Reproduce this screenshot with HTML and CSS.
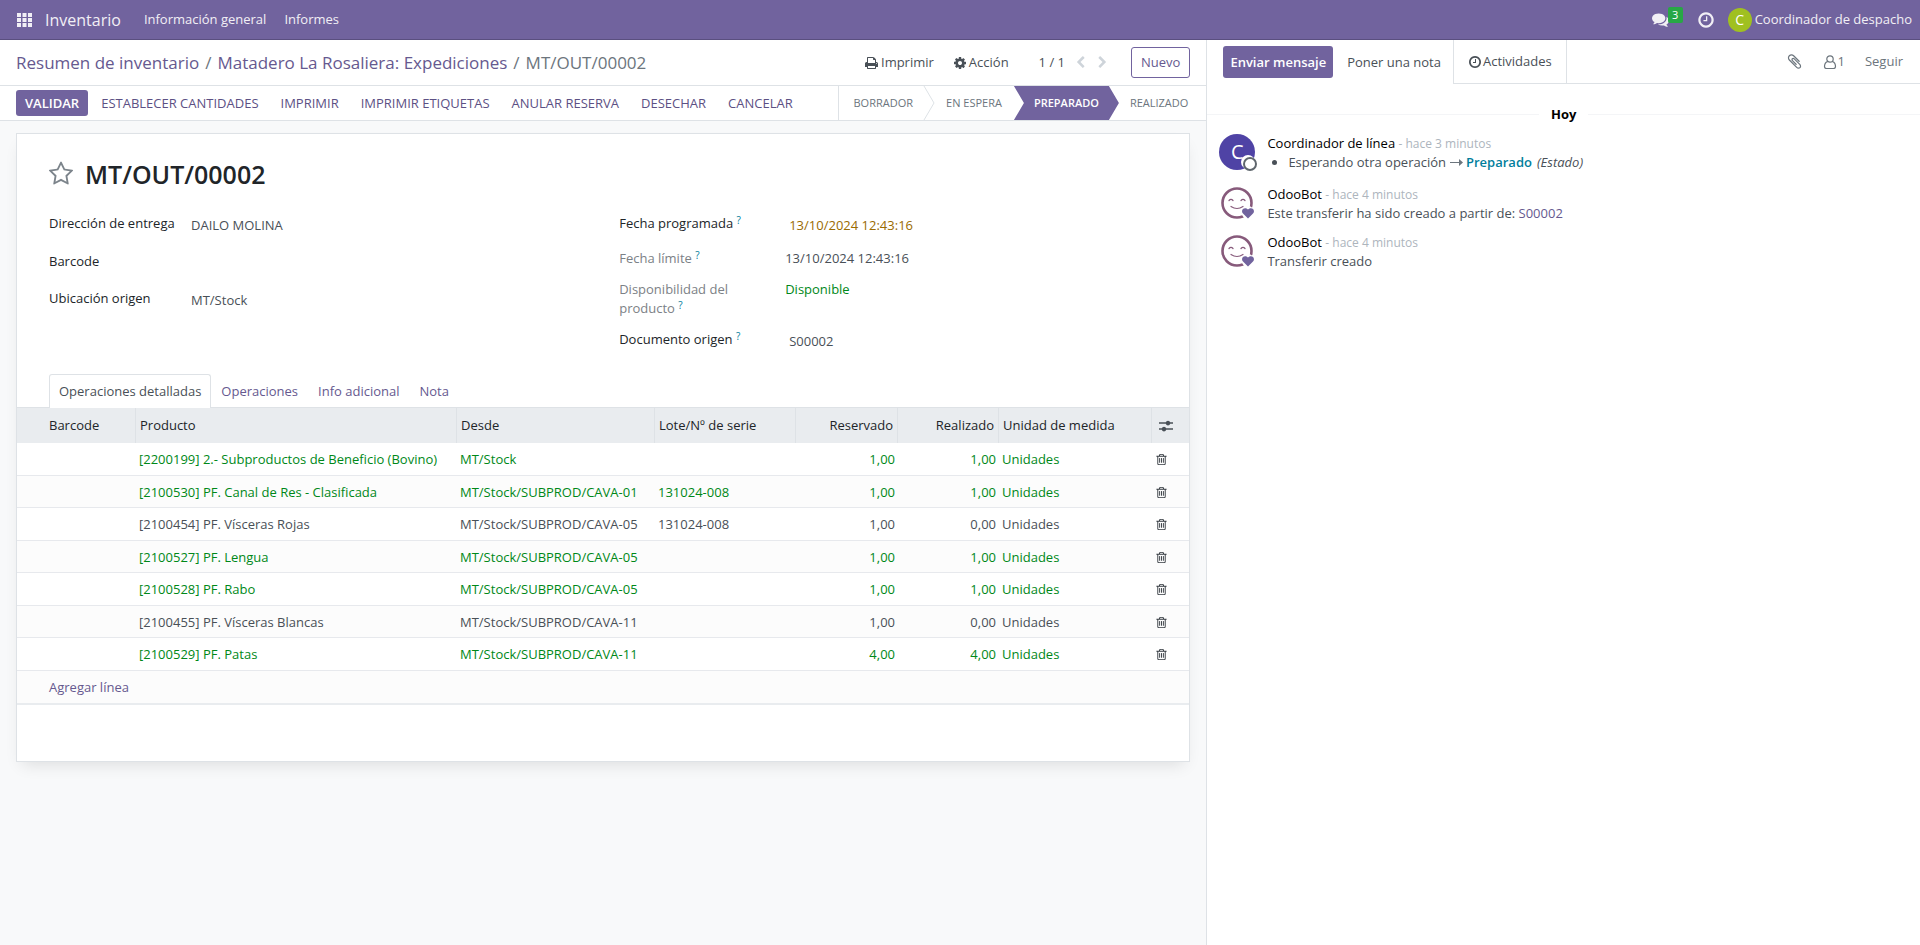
FILE: index.html
```html
<!DOCTYPE html>
<html lang="es">
<head>
<meta charset="utf-8">
<title>MT/OUT/00002 - Inventario</title>
<link rel="stylesheet" href="styles.css">
</head>
<body>
<svg class="defs" aria-hidden="true">
  <symbol id="i-print" viewBox="0 0 1792 1792"><path d="M384 1536h896v-256h-896v256zm0-640h896v-384h-160q-40 0-68-28t-28-68v-160h-640v640zm1152 64q0-26-19-45t-45-19-45 19-19 45 19 45 45 19 45-19 19-45zm128 0v416q0 13-9.5 22.5t-22.5 9.5h-224v160q0 40-28 68t-68 28h-960q-40 0-68-28t-28-68v-160h-224q-13 0-22.5-9.5t-9.5-22.5v-416q0-79 56.5-135.5t135.500-56.500h64v-544q0-40 28-68t68-28h672q40 0 88 20t76 48l152 152q28 28 48 76t20 88v256h64q79 0 135.500 56.500t56.500 135.500z"/></symbol>
  <symbol id="i-cog" viewBox="0 0 1792 1792"><path d="M1152 896q0-106-75-181t-181-75-181 75-75 181 75 181 181 75 181-75 75-181zm512-109v222q0 12-8 23t-20 13l-185 28q-19 54-39 91 35 50 107 138 10 12 10 25t-9 23q-27 37-99 108t-94 71q-12 0-26-9l-138-108q-44 23-91 38-16 136-29 186-7 28-36 28h-222q-14 0-24.500-8.500t-11.500-21.500l-28-184q-49-16-90-37l-141 107q-10 9-25 9-14 0-25-11-126-114-165-168-7-10-7-23 0-12 8-23 15-21 51-66.500t54-70.500q-27-50-41-99l-183-27q-13-2-21-12.500t-8-23.500v-222q0-12 8-23t19-13l186-28q14-46 39-92-40-57-107-138-10-12-10-24 0-10 9-23 26-36 98.500-107.500t94.500-71.500q13 0 26 10l138 107q44-23 91-38 16-136 29-186 7-28 36-28h222q14 0 24.500 8.500t11.500 21.500l28 184q49 16 90 37l142-107q9-9 24-9 13 0 25 10 129 119 165 170 7 8 7 22 0 12-8 23-15 21-51 66.500t-54 70.500q26 50 41 98l183 28q13 2 21 12.500t8 23.500z"/></symbol>
  <symbol id="i-clock" viewBox="0 0 1792 1792"><path d="M1024 544v448q0 14-9 23t-23 9h-320q-14 0-23-9t-9-23v-64q0-14 9-23t23-9h224v-352q0-14 9-23t23-9h64q14 0 23 9t9 23zm416 352q0-148-73-273t-198-198-273-73-273 73-198 198-73 273 73 273 198 198 273 73 273-73 198-198 73-273zm224 0q0 209-103 385.500t-279.500 279.500-385.500 103-385.500-103-279.500-279.500-103-385.500 103-385.500 279.500-279.500 385.500-103 385.500 103 279.500 279.500 103 385.500z"/></symbol>
  <symbol id="i-comments" viewBox="0 0 1792 1792"><path d="M1408 768q0 139-94 257t-256.500 186.500-353.500 68.500q-86 0-176-16-124 88-278 128-36 9-86 16h-3q-11 0-20.500-8t-11.500-21q-1-3-1-6.500t.5-6.500 2-6l2.500-5 3.500-5.500 4-5 4.500-5 4-4.500q5-6 23-25t26-29.500 22.500-29 25-38.500 20.500-44q-124-72-195-177t-71-224q0-139 94-257t256.500-186.500 353.500-68.500 353.500 68.500 256.500 186.500 94 257zm384 256q0 120-71 224.500t-195 176.500q10 24 20.500 44t25 38.500 22.500 29 26 29.500 23 25q1 1 4 4.500t4.500 5 4 5 3.500 5.500l2.500 5 2 6 .5 6.500-1 6.500q-3 14-13 22t-22 7q-50-7-86-16-154-40-278-128-90 16-176 16-271 0-472-132 58 4 88 4 161 0 309-45t264-129q125-92 192-212t67-254q0-77-23-152 129 71 204 178t75 230z"/></symbol>
  <symbol id="i-trash" viewBox="0 0 1792 1792"><path d="M704 736v576q0 14-9 23t-23 9h-64q-14 0-23-9t-9-23v-576q0-14 9-23t23-9h64q14 0 23 9t9 23zm256 0v576q0 14-9 23t-23 9h-64q-14 0-23-9t-9-23v-576q0-14 9-23t23-9h64q14 0 23 9t9 23zm256 0v576q0 14-9 23t-23 9h-64q-14 0-23-9t-9-23v-576q0-14 9-23t23-9h64q14 0 23 9t9 23zm128 724v-948h-896v948q0 22 7 40.500t14.500 27 10.500 8.500h832q3 0 10.500-8.500t14.500-27 7-40.500zm-672-1076h448l-48-117q-7-9-17-11h-317q-10 2-17 11zm928 32v64q0 14-9 23t-23 9h-96v948q0 83-47 143.500t-113 60.500h-832q-66 0-113-58.500t-47-141.500v-952h-96q-14 0-23-9t-9-23v-64q0-14 9-23t23-9h309l70-167q15-37 54-63t79-26h320q40 0 79 26t54 63l70 167h309q14 0 23 9t9 23z"/></symbol>
  <symbol id="i-star" viewBox="0 0 1792 1792"><path d="M1201 1004l306-297-422-62-189-382-189 382-422 62 306 297-73 421 378-199 377 199zm527-357q0 22-26 48l-363 354 86 500q1 7 1 20 0 50-41 50-19 0-40-12l-449-236-449 236q-22 12-40 12-21 0-31.500-14.500t-10.500-35.500q0-6 2-20l86-500-364-354q-25-27-25-48 0-37 56-46l502-73 225-455q19-41 49-41t49 41l225 455 502 73q56 9 56 46z"/></symbol>
  <symbol id="i-left" viewBox="0 0 1792 1792"><path d="M1427 301l-531 531 531 531q19 19 19 45t-19 45l-166 166q-19 19-45 19t-45-19l-742-742q-19-19-19-45t19-45l742-742q19-19 45-19t45 19l166 166q19 19 19 45t-19 45z"/></symbol>
  <symbol id="i-right" viewBox="0 0 1792 1792"><path d="M365 301l531 531-531 531q-19 19-19 45t19 45l166 166q19 19 45 19t45-19l742-742q19-19 19-45t-19-45l-742-742q-19-19-45-19t-45 19l-166 166q-19 19-19 45t19 45z"/></symbol>
  <symbol id="i-clip" viewBox="0 0 1792 1792"><path d="M1596 1385q0 117-79 196t-196 79q-135 0-235-100l-777-776q-113-115-113-271 0-159 110-270t269-111q158 0 273 113l605 606q10 10 10 22 0 16-30.500 46.500t-46.500 30.500q-13 0-23-10l-606-607q-79-77-181-77-106 0-179 75t-73 181q0 105 76 181l776 777q63 63 145 63 64 0 106-42t42-106q0-82-63-145l-581-581q-26-24-60-24-29 0-48 19t-19 48q0 32 25 59l410 410q10 10 10 22 0 16-31 47t-47 31q-12 0-22-10l-410-410q-63-61-63-149 0-82 57-139t139-57q88 0 149 63l581 581q100 98 100 235z"/></symbol>
  <symbol id="i-user" viewBox="0 0 14 14"><path fill="none" stroke="currentColor" stroke-width="1.200" d="M4.500 6.500C2 7.500 1.500 9.500 1.500 11.500c0 1.200.8 2 2 2h7c1.200 0 2-.8 2-2 0-2-.5-4-3-5M7 .8a3.200 3.200 0 1 1 0 6.400a3.200 3.200 0 1 1 0-6.400z"/></symbol>
  <symbol id="i-sliders" viewBox="0 0 14 14"><path d="M0 3.300h6.800a2.300 2.300 0 0 1 4.400 0H14v1.500h-2.800a2.300 2.300 0 0 1-4.400 0H0zM0 9.300h2.800a2.300 2.300 0 0 1 4.400 0H14v1.500H7.200a2.300 2.300 0 0 1-4.400 0H0z"/></symbol>
  <symbol id="i-bot" viewBox="0 0 36 36"><g fill="none" stroke="#875a7b" stroke-linecap="round"><circle cx="18" cy="18" r="14.500" stroke-width="2.600"/><path stroke-width="1.200" d="M10 15.500q2-2.200 4 0M22 15.500q2-2.200 4 0M12 21.500q6 4 12 0"/></g><circle cx="29" cy="27.500" r="6.500" fill="#fff"/><path fill="#71639e" d="M29 33.500l-5-5c-3-3.500 1.600-7.500 5-4c3.400-3.500 8 .5 5 4z"/></symbol>
</svg>

<header class="navbar">
  <button class="apps" aria-label="Aplicaciones"><svg width="15" height="14" viewBox="0 0 15 14"><path d="M0 0h4v4H0zM5.500 0h4v4h-4zM11 0h4v4h-4zM0 5h4v4H0zM5.500 5h4v4h-4zM11 5h4v4h-4zM0 10h4v4H0zM5.500 10h4v4h-4zM11 10h4v4h-4z"/></svg></button>
  <a class="brand" href="#">Inventario</a>
  <nav class="menu"><a href="#">Información general</a><a href="#">Informes</a></nav>
  <div class="systray">
    <button class="chat" aria-label="Conversaciones"><svg class="ic17"><use href="#i-comments"/></svg><span class="badge">3</span></button>
    <button class="clock" aria-label="Actividades"><svg class="ic18"><use href="#i-clock"/></svg></button>
    <button class="user"><span class="useravatar">C</span>Coordinador de despacho</button>
  </div>
</header>

<div class="layout">
  <main class="main">
    <div class="panel">
      <nav class="crumbs"><a href="#">Resumen de inventario</a><span>/</span><a href="#">Matadero La Rosaliera: Expediciones</a><span>/</span><span>MT/OUT/00002</span></nav>
      <div class="tools">
        <button class="tool"><svg class="ic14"><use href="#i-print"/></svg>Imprimir</button>
        <button class="tool"><svg class="ic14"><use href="#i-cog"/></svg>Acción</button>
      </div>
      <div class="pager"><span>1 / 1</span><button aria-label="Anterior"><svg class="ic13"><use href="#i-left"/></svg></button><button aria-label="Siguiente"><svg class="ic13"><use href="#i-right"/></svg></button></div>
      <button class="new">Nuevo</button>
    </div>

    <div class="statusbar">
      <div class="actions">
        <button class="primary">VALIDAR</button>
        <button>ESTABLECER CANTIDADES</button>
        <button>IMPRIMIR</button>
        <button>IMPRIMIR ETIQUETAS</button>
        <button>ANULAR RESERVA</button>
        <button>DESECHAR</button>
        <button>CANCELAR</button>
      </div>
      <ol class="steps">
        <li class="first">BORRADOR<svg class="sep" viewBox="0 0 12 34"><path d="M1 0l10 17L1 34"/></svg></li>
        <li>EN ESPERA</li>
        <li class="current">PREPARADO</li>
        <li>REALIZADO</li>
      </ol>
    </div>

    <div class="content">
      <section class="sheet">
        <div class="titlerow">
          <button class="star" aria-label="Prioridad"><svg class="ic26"><use href="#i-star"/></svg></button>
          <h1>MT/OUT/00002</h1>
        </div>
        <div class="fields">
          <dl class="group left">
            <dt>Dirección de entrega</dt><dd class="in">DAILO MOLINA</dd>
            <dt>Barcode</dt><dd></dd>
            <dt>Ubicación origen</dt><dd class="in">MT/Stock</dd>
          </dl>
          <dl class="group right">
            <dt>Fecha programada <sup>?</sup></dt><dd class="in warn">13/10/2024 12:43:16</dd>
            <dt class="ro">Fecha límite <sup>?</sup></dt><dd>13/10/2024 12:43:16</dd>
            <dt class="ro">Disponibilidad del producto <sup>?</sup></dt><dd class="ok">Disponible</dd>
            <dt>Documento origen <sup>?</sup></dt><dd class="in">S00002</dd>
          </dl>
        </div>
        <div class="tabs" role="tablist">
          <button role="tab" class="active" aria-selected="true">Operaciones detalladas</button>
          <button role="tab">Operaciones</button>
          <button role="tab">Info adicional</button>
          <button role="tab">Nota</button>
        </div>
        <table class="lines">
          <colgroup><col class="c1"><col class="c2"><col class="c3"><col class="c4"><col class="c5"><col class="c6"><col class="c7"><col class="c8"></colgroup>
          <thead><tr><th>Barcode</th><th>Producto</th><th>Desde</th><th>Lote/Nº de serie</th><th class="num">Reservado</th><th class="num">Realizado</th><th>Unidad de medida</th><th class="opt"><button aria-label="Columnas"><svg class="ic14"><use href="#i-sliders"/></svg></button></th></tr></thead>
          <tbody>
            <tr class="ok"><td></td><td>[2200199] 2.- Subproductos de Beneficio (Bovino)</td><td>MT/Stock</td><td></td><td class="num">1,00</td><td class="num">1,00</td><td>Unidades</td><td><button aria-label="Eliminar"><svg class="ic13"><use href="#i-trash"/></svg></button></td></tr>
            <tr class="ok"><td></td><td>[2100530] PF. Canal de Res - Clasificada</td><td>MT/Stock/SUBPROD/CAVA-01</td><td>131024-008</td><td class="num">1,00</td><td class="num">1,00</td><td>Unidades</td><td><button aria-label="Eliminar"><svg class="ic13"><use href="#i-trash"/></svg></button></td></tr>
            <tr><td></td><td>[2100454] PF. Vísceras Rojas</td><td>MT/Stock/SUBPROD/CAVA-05</td><td>131024-008</td><td class="num">1,00</td><td class="num">0,00</td><td>Unidades</td><td><button aria-label="Eliminar"><svg class="ic13"><use href="#i-trash"/></svg></button></td></tr>
            <tr class="ok"><td></td><td>[2100527] PF. Lengua</td><td>MT/Stock/SUBPROD/CAVA-05</td><td></td><td class="num">1,00</td><td class="num">1,00</td><td>Unidades</td><td><button aria-label="Eliminar"><svg class="ic13"><use href="#i-trash"/></svg></button></td></tr>
            <tr class="ok"><td></td><td>[2100528] PF. Rabo</td><td>MT/Stock/SUBPROD/CAVA-05</td><td></td><td class="num">1,00</td><td class="num">1,00</td><td>Unidades</td><td><button aria-label="Eliminar"><svg class="ic13"><use href="#i-trash"/></svg></button></td></tr>
            <tr><td></td><td>[2100455] PF. Vísceras Blancas</td><td>MT/Stock/SUBPROD/CAVA-11</td><td></td><td class="num">1,00</td><td class="num">0,00</td><td>Unidades</td><td><button aria-label="Eliminar"><svg class="ic13"><use href="#i-trash"/></svg></button></td></tr>
            <tr class="ok"><td></td><td>[2100529] PF. Patas</td><td>MT/Stock/SUBPROD/CAVA-11</td><td></td><td class="num">4,00</td><td class="num">4,00</td><td>Unidades</td><td><button aria-label="Eliminar"><svg class="ic13"><use href="#i-trash"/></svg></button></td></tr>
            <tr class="add"><td colspan="8"><a href="#">Agregar línea</a></td></tr>
          </tbody>
        </table>
      </section>
    </div>
  </main>

  <aside class="chatter">
    <div class="topbar">
      <div class="compose"><button class="send">Enviar mensaje</button><button class="note">Poner una nota</button></div>
      <div class="rest">
        <button class="activities"><svg class="ic14"><use href="#i-clock"/></svg>Actividades</button>
        <div class="follow">
          <button aria-label="Adjuntos"><svg class="ic17"><use href="#i-clip"/></svg></button>
          <button class="followers"><svg class="ic14"><use href="#i-user"/></svg>1</button>
          <button>Seguir</button>
        </div>
      </div>
    </div>
    <div class="day"><span>Hoy</span></div>
    <article class="msg">
      <div class="avatar letter">C<i class="presence"></i></div>
      <div class="body">
        <p><b>Coordinador de línea</b> <time>- hace 3 minutos</time></p>
        <ul><li>Esperando otra operación<svg class="arrow" viewBox="0 0 13 9"><path d="M0 4h9V1l4 3.500L9 8V5H0z"/></svg><strong>Preparado</strong><em>(Estado)</em></li></ul>
      </div>
    </article>
    <article class="msg">
      <div class="avatar"><svg><use href="#i-bot"/></svg></div>
      <div class="body"><p><b>OdooBot</b> <time>- hace 4 minutos</time></p><p>Este transferir ha sido creado a partir de: <a href="#">S00002</a></p></div>
    </article>
    <article class="msg">
      <div class="avatar"><svg><use href="#i-bot"/></svg></div>
      <div class="body"><p><b>OdooBot</b> <time>- hace 4 minutos</time></p><p>Transferir creado</p></div>
    </article>
  </aside>
</div>
</body>
</html>
```
FILE: styles.css
```css
* { box-sizing: border-box; }
body {
  margin: 0;
  min-height: 100vh;
  display: flex;
  flex-direction: column;
  font: 13px/19px "Open Sans", "Noto Sans", sans-serif;
  color: #495057;
  background: #fff;
}
button { font: inherit; color: inherit; background: none; border: 0; padding: 0; margin: 0; white-space: nowrap; }
a { color: inherit; text-decoration: none; }
svg { display: block; fill: currentColor; flex: none; }
p, ul, ol, dl, dd, h1 { margin: 0; padding: 0; }
.defs { position: absolute; width: 0; height: 0; }
.ic13 { width: 13px; height: 13px; }
.ic14 { width: 14px; height: 14px; }
.ic17 { width: 17px; height: 17px; }
.ic18 { width: 18px; height: 18px; }
.ic26 { width: 26px; height: 26px; }

.navbar { height: 40px; display: flex; align-items: center; padding: 0 8px 0 17px; background: #71639e; border-bottom: 1px solid #5a4f7f; color: #f1eff5; }
.brand { margin-left: 13px; font-size: 16px; line-height: 24px; }
.menu { display: flex; gap: 18px; margin-left: 23px; }
.systray { margin-left: auto; display: flex; align-items: center; }
.systray button { display: flex; align-items: center; }
.chat { position: relative; margin-right: 28px; }
.badge { position: absolute; left: 16px; top: -4px; width: 15px; height: 16px; border-radius: 2px; background: #28a745; color: #fff; font-size: 11px; line-height: 16px; text-align: center; }
.clock { margin-right: 13px; }
.useravatar { width: 24px; height: 24px; margin-right: 3px; border-radius: 50%; background: #a0c020; color: #fff; font-size: 14px; line-height: 24px; text-align: center; }

.layout { flex: 1; display: flex; }
.main { flex: 1207; min-width: 0; display: flex; flex-direction: column; }
.chatter { flex: 713; min-width: 0; border-left: 1px solid #dee2e6; }

.panel { height: 46px; display: flex; align-items: center; padding: 0 16px; border-bottom: 1px solid #dee2e6; white-space: nowrap; }
.crumbs { display: flex; gap: 6px; margin-right: auto; font-size: 17px; line-height: 24px; color: #6c757d; }
.crumbs a { color: #66598f; }
.tools { display: flex; gap: 19px; font-weight: 500; }
.tool { display: flex; align-items: center; gap: 2px; }
.pager { display: flex; align-items: center; gap: 9px; margin-left: 30px; }
.pager button { color: #ced4da; }
.new { height: 31px; padding: 0 9px; margin-left: 22px; border: 1px solid #71639e; border-radius: 3px; color: #66598f; font-weight: 500; }

.statusbar { height: 35px; display: flex; align-items: center; padding-left: 16px; border-bottom: 1px solid #dee2e6; }
.actions { display: flex; gap: 4px; }
.actions button { height: 26px; padding: 0 9px; border-radius: 3px; color: #5c5084; font-weight: 500; }
.actions .primary { background: #71639e; color: #fff; font-weight: 600; }
.steps { margin-left: auto; display: flex; align-self: stretch; list-style: none; font-size: 11px; line-height: 34px; color: #6c757d; white-space: nowrap; }
.steps li { position: relative; padding: 0 18px 0 11px; }
.steps .first { padding: 0 22px 0 15px; border-left: 1px solid #dee2e6; }
.steps .current { margin-left: -6px; padding: 0 20px; background: #71639e; color: #fff; font-weight: 600; clip-path: polygon(0 0, calc(100% - 10px) 0, 100% 50%, calc(100% - 10px) 100%, 0 100%, 10px 50%); }
.sep { position: absolute; right: 0; top: 0; width: 12px; height: 34px; fill: none; stroke: #dee2e6; }

.content { flex: 1; padding: 12px 16px 16px; background: #f8f9fa; }
.sheet { padding: 24px 0 56px; background: #fff; border: 1px solid #dee2e6; box-shadow: 0 8px 16px -6px rgba(0, 0, 0, .12); }
.titlerow { display: flex; align-items: center; gap: 11px; padding: 0 31px; height: 32px; color: #212529; }
.titlerow h1 { font-size: 25px; line-height: 32px; font-weight: 600; }
.star { color: #7c848b; }

.fields { display: grid; grid-template-columns: 1fr 1fr; gap: 32px; padding: 24px 32px 0; min-height: 184px; }
.group { display: grid; align-content: start; }
.group.left { grid-template-columns: 142px 1fr; grid-template-rows: 38px 37px 37px; }
.group.right { grid-template-columns: 166px 1fr; grid-template-rows: 35px 31px 50px 37px; }
.group dt { color: #212529; font-weight: 500; max-width: 150px; }
.group dt.ro { color: #7c8186; font-weight: 400; }
.group dd.in { padding-top: 2px; }
.group.right dd.in { padding-left: 4px; }
.warn { color: #9a6b01; }
.ok { color: #008818; }
sup { font-size: 10px; line-height: 0; vertical-align: 4px; color: #017e9c; }

.tabs { display: flex; padding: 0 32px; border-bottom: 1px solid #dee2e6; color: #66598f; }
.tabs button { height: 33px; padding: 0 9px; border: 1px solid transparent; border-bottom: 0; }
.tabs .active { height: 34px; margin-bottom: -1px; border-color: #dee2e6; border-radius: 3px 3px 0 0; background: #fff; color: #495057; }

.lines { width: 100%; table-layout: fixed; border-collapse: separate; border-spacing: 0; }
.c1 { width: 119px; } .c2 { width: 321px; } .c3 { width: 198px; } .c4 { width: 141px; }
.c5 { width: 102px; } .c6 { width: 101px; } .c7 { width: 153px; } .c8 { width: auto; }
.lines th { height: 35px; padding: 0 4px; background: #e9ecef; border-right: 1px solid #dee2e6; color: #212529; font-weight: 500; text-align: left; }
.lines th:last-child { border-right: 0; }
.lines td { height: 33px; padding: 0 3px; border-bottom: 1px solid #e7e9ed; white-space: nowrap; line-height: 19px; }
.lines tbody tr:nth-child(even) td { height: 32px; padding-top: 1px; background: #fcfcfc; }
.lines th:first-child, .lines .add td { padding-left: 32px; }
.lines .num { text-align: right; }
.lines button { display: block; color: #343a40; }
.lines .opt button { padding: 0 3px; color: #495057; }
.lines tbody .add:nth-child(even) td { height: 34px; border-bottom: 2px solid #e9ecef; color: #66598f; }

.topbar { display: flex; height: 44px; }
.compose { display: flex; align-items: center; padding: 0 12px 0 16px; font-weight: 500; }
.send { height: 32px; padding: 0 7px; border-radius: 3px; background: #71639e; color: #fff; font-weight: 600; }
.note { padding-left: 14px; }
.rest { flex: 1; display: flex; align-items: stretch; border-left: 1px solid #dee2e6; border-bottom: 1px solid #dee2e6; }
.activities { display: flex; align-items: center; gap: 1px; padding: 0 14px; border-right: 1px solid #dee2e6; font-weight: 500; }
.follow { margin-left: auto; padding-right: 17px; display: flex; align-items: center; gap: 20px; color: #6c757d; }
.followers { display: flex; align-items: center; gap: 1px; }
.day { display: flex; align-items: center; gap: 12px; margin-top: 21px; color: #000; font-weight: 700; }
.day::before, .day::after { content: ""; flex: 1; border-top: 1px solid #f4f5f7; }
.msg { display: flex; padding: 10px 12px 0; gap: 12px; }
.msg + .msg { padding-top: 13px; }
.msg + .msg + .msg { padding-top: 10px; }
.avatar { position: relative; width: 36px; height: 36px; }
.avatar svg { width: 36px; height: 36px; }
.letter { border-radius: 50%; background: #4f43a5; color: #fff; font-size: 20px; line-height: 36px; text-align: center; }
.presence { position: absolute; right: 0; bottom: 1px; width: 14px; height: 14px; border: 2px solid #fff; border-radius: 50%; background: #fff; }
.presence::before { content: ""; display: block; width: 10px; height: 10px; border: 2px solid #5f666d; border-radius: 50%; }
.body { line-height: 19px; }
.body b { color: #000; font-weight: 500; }
.body time { color: #adb5bd; font-size: 12px; }
.body a { color: #66598f; }
.body ul { padding-left: 21px; }
.arrow { display: inline-block; width: 13px; height: 9px; margin: 0 3px 0 4px; color: #6c757d; }
.body strong { color: #017e9c; font-weight: 600; }
.body em { margin-left: 5px; }
```
